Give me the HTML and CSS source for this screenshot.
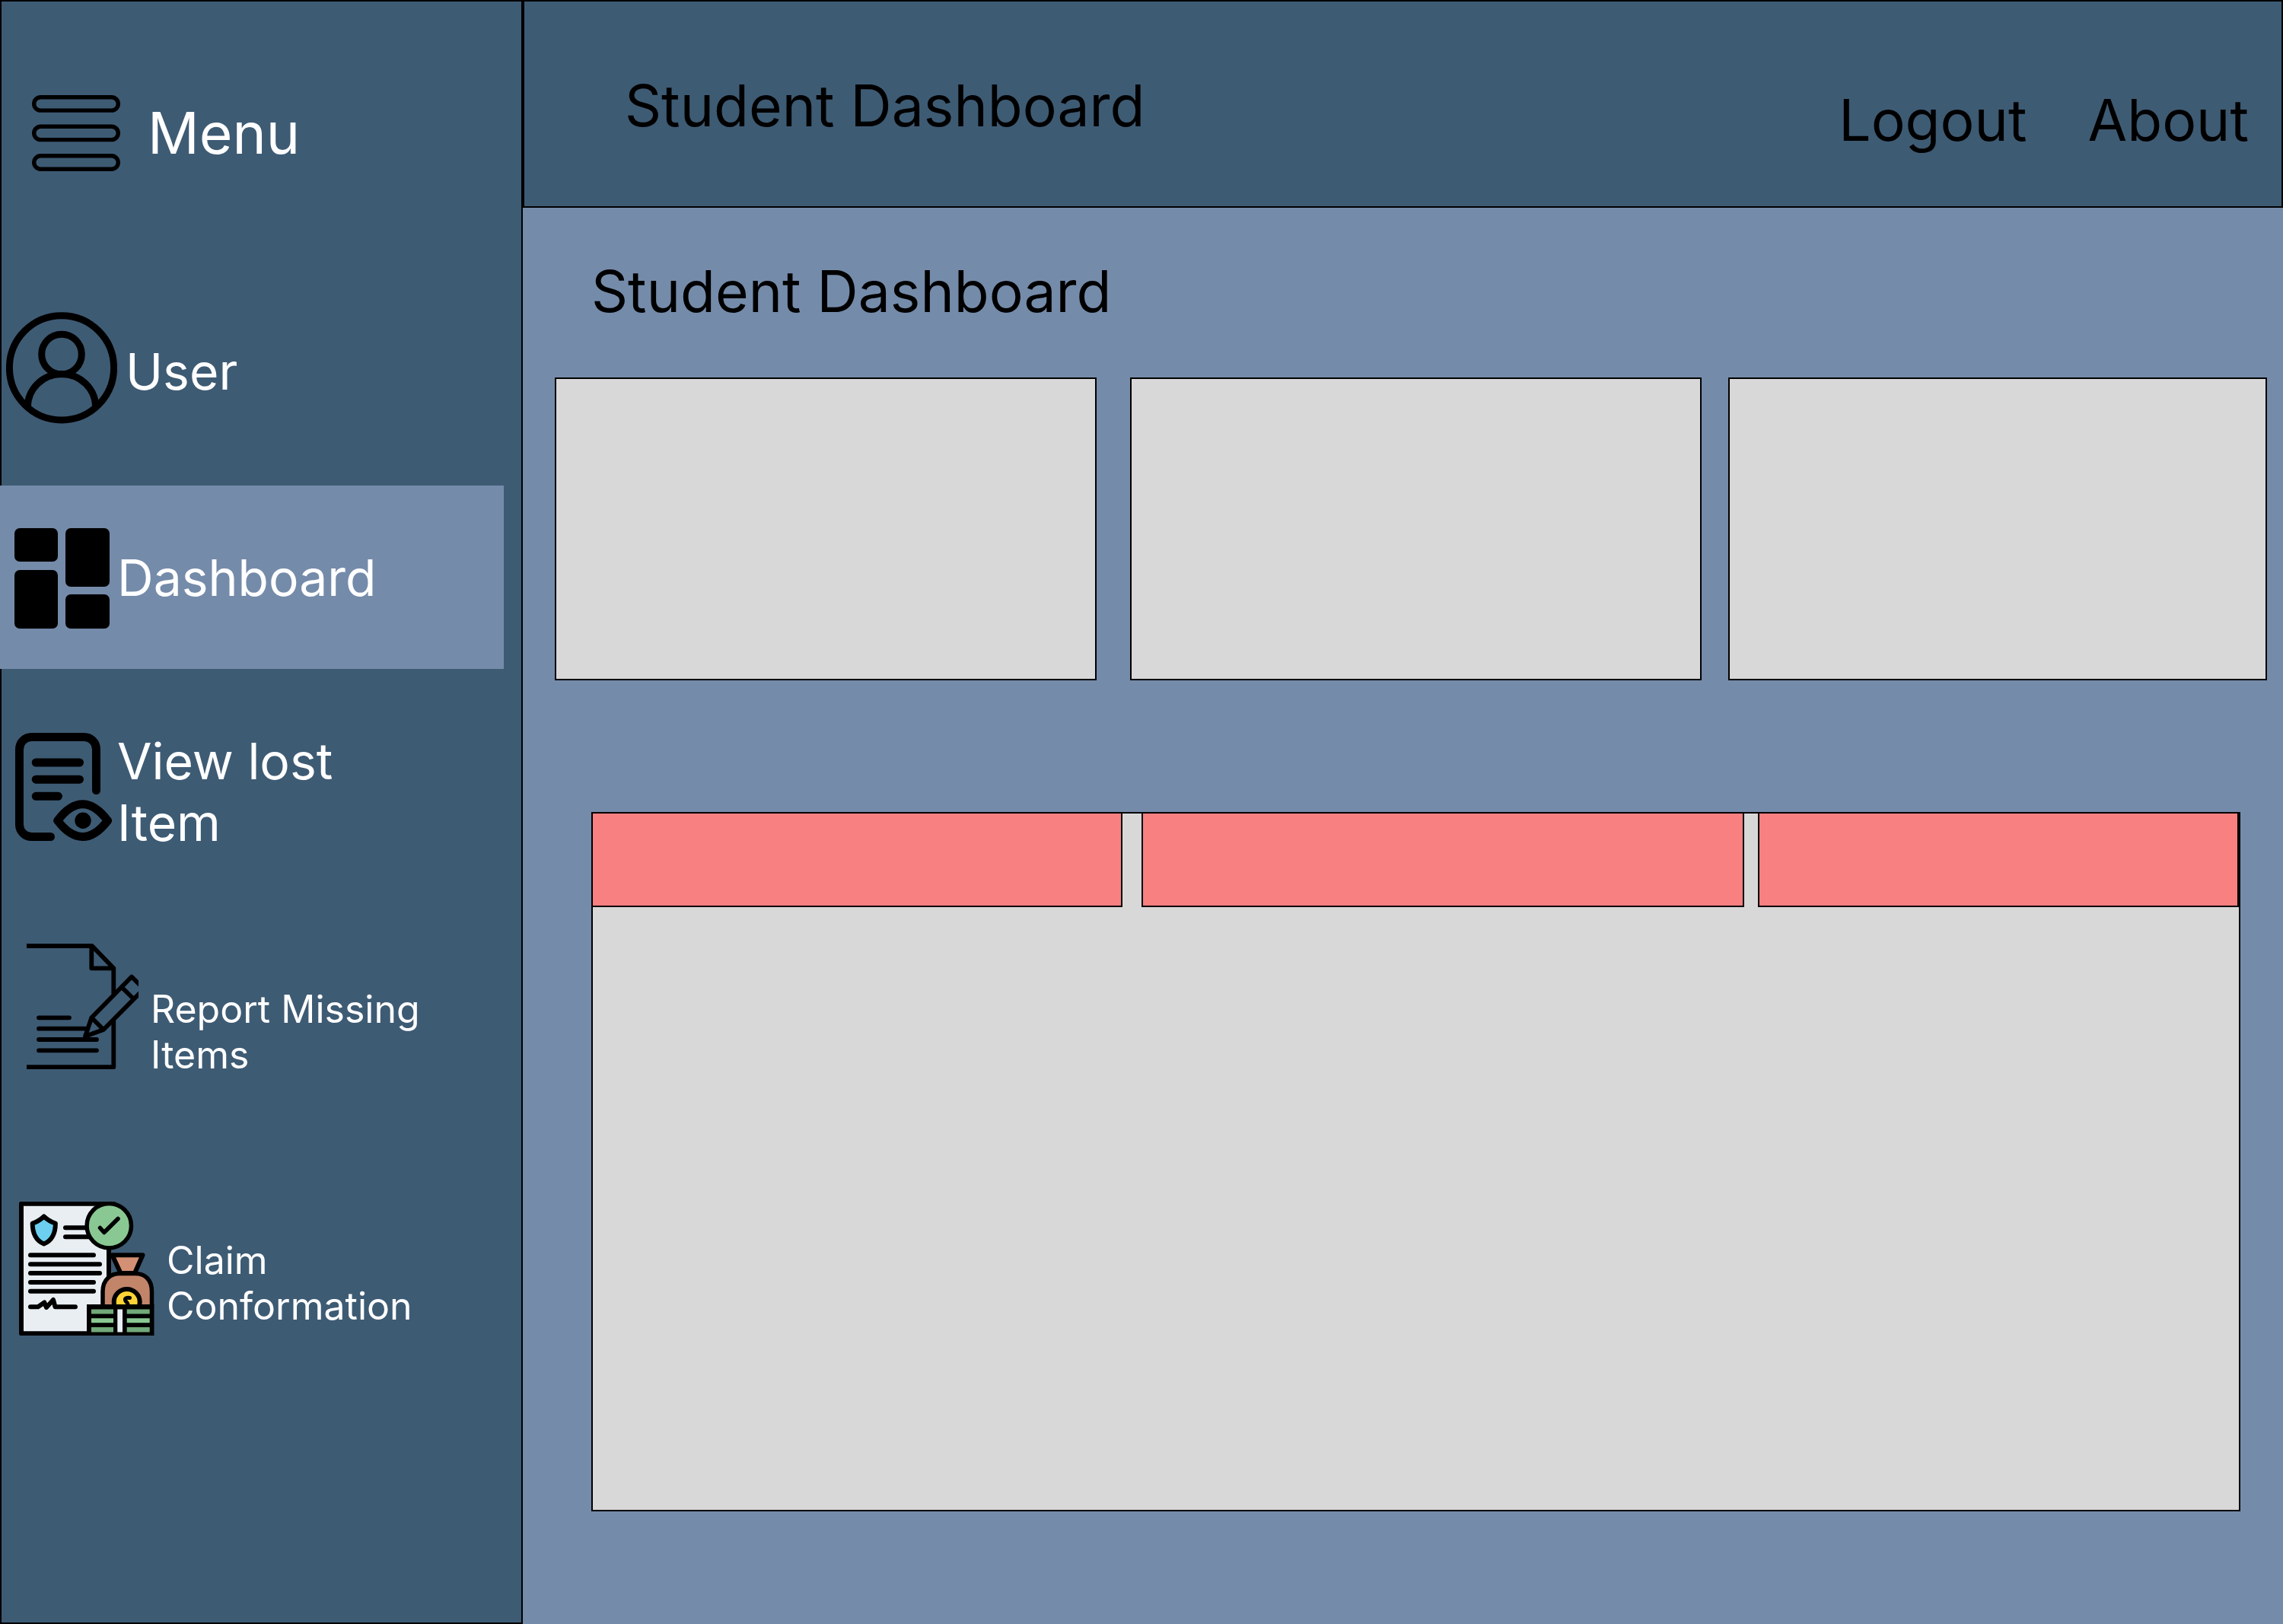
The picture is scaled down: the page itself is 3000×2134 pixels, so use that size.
FILE: index.html
```html
<!DOCTYPE html>
<html lang="en">
<head>
<meta charset="utf-8">
<meta name="viewport" content="width=device-width, initial-scale=1">
<title>Student Dashboard</title>
<link rel="stylesheet" href="styles.css">
</head>
<body>
<div class="app">
  <aside class="sidebar">
    <button class="menu" type="button">
      <svg width="116" height="100" viewBox="0 0 116 100" fill="none" stroke="#000" stroke-width="5.4" aria-hidden="true">
        <rect x="2.7" y="2.7" width="110.6" height="17.4" rx="8.7"/>
        <rect x="2.7" y="41.2" width="110.6" height="17.4" rx="8.7"/>
        <rect x="2.7" y="79.8" width="110.6" height="17.4" rx="8.7"/>
      </svg>
      <span>Menu</span>
    </button>
    <nav class="nav" aria-label="Menu">
      <a class="item item-user" href="#user">
        <svg width="146" height="157" viewBox="0 0 146 157" fill="none" stroke="#000" stroke-width="9" aria-hidden="true">
          <circle cx="73" cy="73.3" r="68.6"/>
          <circle cx="73" cy="55.5" r="26.3"/>
          <path d="M28.3 127V125A44.7 43.5 0 0 1 117.7 125V127"/>
        </svg>
        <span class="label">User</span>
      </a>
      <a class="item item-dashboard" href="#dashboard" aria-current="page">
        <svg width="125" height="132" viewBox="0 0 125 132" aria-hidden="true">
          <rect width="57" height="44" rx="7"/>
          <rect x="67" width="58" height="77" rx="7"/>
          <rect y="55" width="57" height="77" rx="7"/>
          <rect x="67" y="87" width="58" height="45" rx="7"/>
        </svg>
        <span class="label">Dashboard</span>
      </a>
      <a class="item item-lost" href="#lost">
        <svg width="127" height="162" viewBox="0 0 127 162" fill="none" stroke="#000" stroke-width="11" stroke-linecap="round" stroke-linejoin="round" aria-hidden="true">
          <path d="M106.5 78.5V24.5A16 16 0 0 0 90.5 8.5H21.5A16 16 0 0 0 5.5 24.5V123.5A16 16 0 0 0 21.5 139.5H46.5"/>
          <path d="M27.2 42H84.5M27.2 64.2H84.5M27.2 86.3H56.5"/>
          <path d="M55.7 118.3C66 104.5 77 96.7 88.7 96.7S111 104.5 121.5 118.3C111 132 100 139.5 88.7 139.5S66 132 55.7 118.3Z"/>
          <circle cx="89" cy="118.3" r="10.7" fill="#000" stroke="none"/>
        </svg>
        <span class="label">View lost Item</span>
      </a>
      <a class="item item-small item-report" href="#report">
        <svg width="147" height="165" viewBox="0 0 147 165" fill="none" stroke="#000" stroke-width="5.8" stroke-linejoin="round" aria-hidden="true">
          <path d="M0 3H86L114.3 32.3V66M114.3 101V162.2H0M85.3 4V32.3H114.3"/>
          <path stroke-linecap="round" d="M16 97.3H56M16 111.7H77M16 126H92M16 140.3H92"/>
          <path d="M138 43.5L154 59.5L101 113L77 121.7L85.3 97.3ZM126 58.3L140 72M85.3 97.3L101 113"/>
        </svg>
        <span class="label">Report Missing Items</span>
      </a>
      <a class="item item-small item-claim" href="#claim">
        <svg width="178" height="176" viewBox="0 0 178 176" fill="none" stroke="#000" stroke-width="6" stroke-linecap="round" stroke-linejoin="round" aria-hidden="true">
          <rect x="3" y="2.7" width="115" height="170.5" fill="#e9eef2"/>
          <path d="M61 34.3H92M61 46.3H94M15 70.3H98M15 82.3H106M15 94H106M15 106H98M15 117.7H98"/>
          <path d="M15 138.3H25L33.3 132.5L36 139L45 129L47.5 138.3H74"/>
          <path d="M32.7 19.5C28 24 22.5 27 17.7 28.5C17.7 42 23 51.5 32.7 55.5C42.5 51.5 47.9 42 47.9 28.5C43 27 37.5 24 32.7 19.5Z" fill="#6ccff0"/>
          <path d="M118 2.7H124"/>
          <circle cx="118.3" cy="31.7" r="29.2" fill="#8ac893" stroke-width="5.5"/>
          <path d="M106.5 34.5L111.8 40.5L130 22.5" stroke-width="5.5"/>
          <path d="M122.5 70.2H162.5L152 94H133.5Z" fill="#d49074"/>
          <path d="M110 138V118C110 102 121 94.5 132 94.5H153C165 94.5 174.5 102 174.5 118V138Z" fill="#c2856a" stroke-width="5.5"/>
          <circle cx="141.7" cy="132" r="17" fill="#ffd335"/>
          <path d="M145.5 126.5C140 125.5 138.5 128 140 130.5C141 132 143.5 133 143 136" stroke-width="5"/>
          <path d="M89 135H177.5V176H89Z" fill="#000" stroke="none"/>
          <path d="M95 141.5H124V147.5H95ZM141.7 141.5H171.7V147.5H141.7ZM95 165H124V171.5H95ZM141.7 165H171.7V171.5H141.7Z" fill="#72a97a" stroke="none"/>
          <path d="M95 153.3H124V159.3H95ZM141.7 153.3H171.7V159.3H141.7Z" fill="#8ac893" stroke="none"/>
          <path d="M129.3 141.5H136V171.5H129.3Z" fill="#e9eef2" stroke="none"/>
        </svg>
        <span class="label">Claim Conformation</span>
      </a>
    </nav>
  </aside>
  <div class="page">
    <header class="topbar">
      <h1 class="title">Student Dashboard</h1>
      <nav class="links" aria-label="Account">
        <a href="#logout">Logout</a>
        <a href="#about">About</a>
      </nav>
    </header>
    <main class="content">
      <h2 class="title heading">Student Dashboard</h2>
      <div class="cards">
        <section class="card"></section>
        <section class="card"></section>
        <section class="card"></section>
      </div>
      <section class="panel">
        <div class="panel-head">
          <div class="cell"></div>
          <div class="cell"></div>
          <div class="cell"></div>
        </div>
      </section>
    </main>
  </div>
</div>
</body>
</html>
```
FILE: styles.css
```css
* {
  box-sizing: border-box;
}

body {
  margin: 0;
  font-family: Inter, "Liberation Sans", sans-serif;
  color: #000;
  background: #758baa;
}

a {
  color: inherit;
  text-decoration: none;
}

svg {
  display: block;
  flex: none;
}

.app {
  display: grid;
  grid-template-columns: minmax(600px, 22.9%) 1fr;
  min-height: 100vh;
}

/* Sidebar */

.sidebar {
  padding-top: 123px;
  color: #fff;
  background: #3e5b74;
  border: 2px solid #000;
}

.menu {
  display: flex;
  align-items: center;
  gap: 36px;
  padding: 0 0 0 40px;
  font: inherit;
  font-size: 75px;
  line-height: 92px;
  color: inherit;
  background: none;
  border: 0;
  cursor: pointer;
}

.nav {
  display: flex;
  flex-direction: column;
}

.item {
  display: flex;
  align-items: center;
  font-size: 66px;
  line-height: 81px;
}

.label {
  max-width: 360px;
}

.item-user {
  gap: 11px;
  margin-top: 185px;
  padding-left: 6px;
}

.item-dashboard {
  gap: 10px;
  min-height: 241px;
  margin: 71px 23px 0 -2px;
  padding: 2px 0 0 19px;
  background: #758baa;
}

.item-lost {
  gap: 7px;
  margin-top: 81px;
  padding-left: 18px;
}

.item-small {
  align-items: flex-end;
  min-height: 176px;
  font-size: 50px;
  line-height: 60px;
}

.item-small svg {
  align-self: flex-start;
}

.item-report {
  gap: 16px;
  margin-top: 118px;
  padding-left: 33px;
}

.item-claim {
  gap: 16px;
  margin-top: 163px;
  padding-left: 23px;
}

.item-claim .label {
  padding-bottom: 9px;
}

/* Page */

.page {
  display: flex;
  flex-direction: column;
  min-width: 0;
}

.topbar {
  display: flex;
  justify-content: space-between;
  align-items: flex-start;
  min-height: 273px;
  padding: 91px 43px 0 132px;
  background: #3e5b74;
  border: 2px solid #000;
}

.title {
  margin: 0;
  font-size: 75px;
  font-weight: 400;
  line-height: 92px;
}

.links {
  display: flex;
  gap: 80px;
  padding-top: 19px;
  font-size: 75px;
  line-height: 92px;
}

.content {
  display: flex;
  flex: 1;
  flex-direction: column;
  padding: 64px 21px 148px 42px;
}

.heading {
  padding-left: 48px;
}

.cards {
  display: grid;
  grid-template-columns: 712fr 44px 751fr 35px 708fr;
  margin-top: 67px;
}

.card {
  min-height: 398px;
  background: #d8d8d8;
  border: 2px solid #000;
}

.card:nth-child(2),
.cell:nth-child(2) {
  grid-column: 3;
}

.card:nth-child(3),
.cell:nth-child(3) {
  grid-column: 5;
}

.panel {
  flex: 1;
  min-height: 500px;
  margin: 173px 35px 0 48px;
  background: #d8d8d8;
  border: 2px solid #000;
}

.panel-head {
  display: grid;
  grid-template-columns: 696fr 25px 792fr 18px 632fr;
}

.cell {
  min-height: 123px;
  background: #f98080;
  border: solid #000;
  border-width: 0 2px 2px;
}

.cell:first-child {
  border-left: 0;
}
```
